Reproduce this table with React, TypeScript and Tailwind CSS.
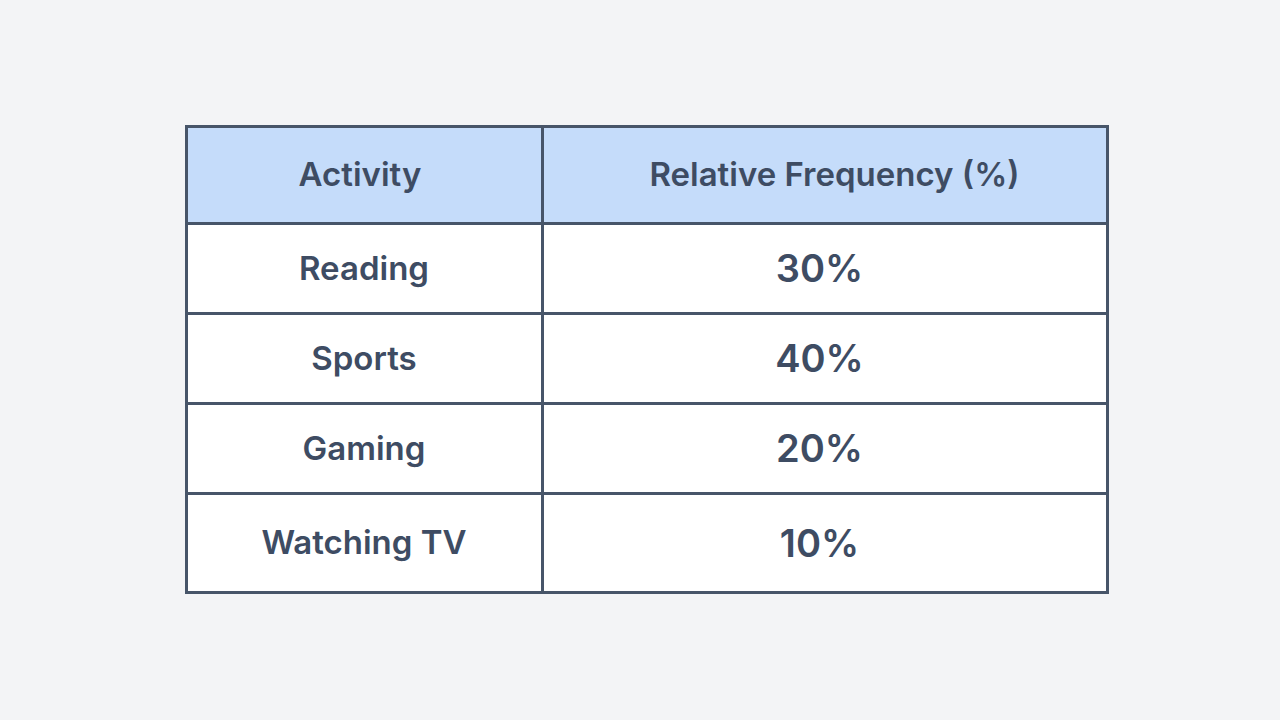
const ROWS: { activity: string; freq: string }[] = [
  { activity: "Reading", freq: "30%" },
  { activity: "Sports", freq: "40%" },
  { activity: "Gaming", freq: "20%" },
  { activity: "Watching TV", freq: "10%" },
];

export default function App() {
  return (
    <div
      className="flex h-[720px] w-[1280px] items-start justify-center bg-[#f3f4f6] pt-[125px] pl-[13px]"
      style={{ fontFamily: "Inter, 'Noto Sans', sans-serif" }}
    >
      <table className="w-[924px] border-collapse border-[3px] border-[#475569] text-[#3e4c63]">
        <thead>
          <tr className="h-[97px] bg-[#c5dcfa]">
            <th className="w-[356px] border-[3px] border-[#475569] pr-[8px] text-[33px] font-semibold">Activity</th>
            <th className="border-[3px] border-[#475569] pl-[20px] text-[33px] font-semibold">Relative Frequency (%)</th>
          </tr>
        </thead>
        <tbody>
          {ROWS.map((row, i) => (
            <tr key={row.activity} className={`bg-white ${i === ROWS.length - 1 ? "h-[99px]" : "h-[90px]"}`}>
              <td className="border-[3px] border-[#475569] text-center text-[33px] font-semibold">{row.activity}</td>
              <td className="border-[3px] border-[#475569] pr-[10px] text-center text-[38px] font-semibold">{row.freq}</td>
            </tr>
          ))}
        </tbody>
      </table>
    </div>
  );
}
